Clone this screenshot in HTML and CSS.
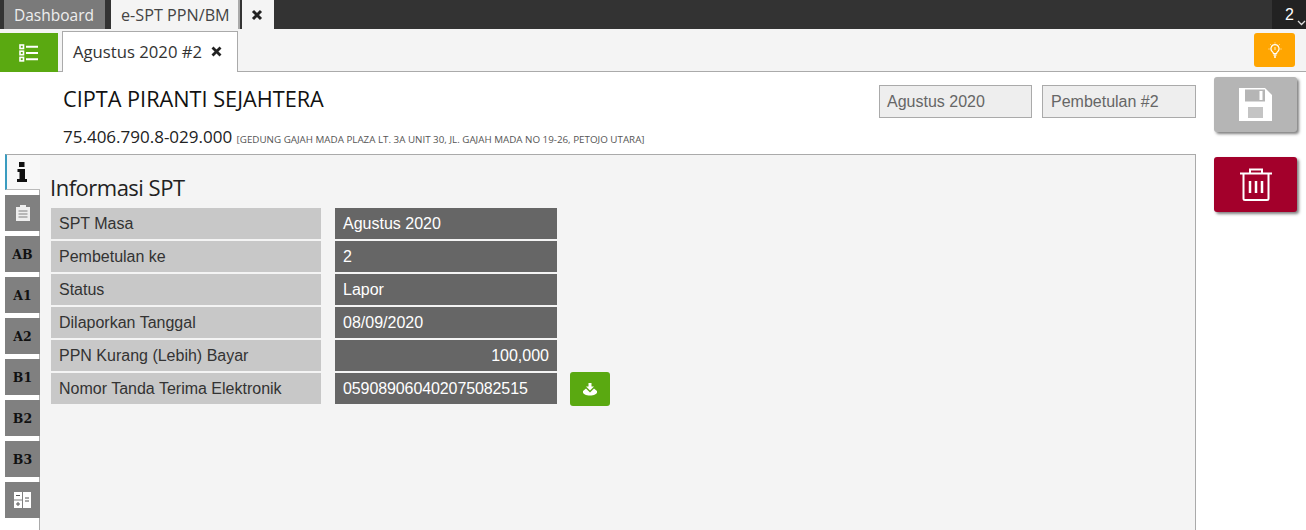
FILE: index.html
```html
<!DOCTYPE html>
<html lang="id">
<head>
<meta charset="utf-8">
<title>e-SPT PPN/BM</title>
<link rel="stylesheet" href="styles.css">
</head>
<body>
<div class="topbar">
  <div class="top-tab top-tab-dark">Dashboard</div>
  <div class="top-tab top-tab-light">e-SPT PPN/BM</div>
  <div class="top-close"><svg width="12" height="12" viewBox="0 0 12 12"><path d="M2 2l8 8M10 2l-8 8" stroke="#222" stroke-width="3" fill="none"/></svg></div>
  <div class="top-count"><span>2</span><svg class="chev" width="9" height="6" viewBox="0 0 9 6"><path d="M1 1l3.500 3.500L8 1" stroke="#ddd" stroke-width="1.300" fill="none"/></svg></div>
</div>
<div class="subbar">
  <div class="menu-btn">
    <svg width="20" height="18" viewBox="0 0 20 18" fill="none" stroke="#fff"><rect x="1" y="1" width="3.500" height="3.500" stroke-width="1.600"/><rect x="1" y="7.200" width="3.500" height="3.500" stroke-width="1.600"/><rect x="1" y="13.400" width="3.500" height="3.500" stroke-width="1.600"/><path d="M7 2.800h12M7 9h12M7 15.200h12" stroke-width="2"/></svg>
  </div>
  <div class="doc-tab"><span>Agustus 2020 #2</span><svg width="11" height="11" viewBox="0 0 11 11"><path d="M1.500 1.500l8 8M9.500 1.500l-8 8" stroke="#222" stroke-width="2.800" fill="none"/></svg></div>
  <div class="hint-btn">
    <svg width="16" height="17" viewBox="0 0 16 17" fill="none" stroke="#fff" stroke-width="1.200"><path d="M8 2.700a4 4 0 0 0-2.400 7.200c.5.400.8 1 .8 1.600h3.200c0-.6.300-1.200.8-1.600A4 4 0 0 0 8 2.700z"/><path d="M8 5v3" stroke="#ffe6b0"/><path d="M6.500 13h3M7 15h2" stroke-width="1.500"/><path d="M8 .5v1M1.500 7h1M13.500 7h1M3.400 2.400l.7.700M12.600 2.400l-.7.700" stroke-width=".8"/></svg>
  </div>
</div>
<div class="workspace">
  <div class="main">
    <header class="head">
      <div class="head-text">
        <h1 class="company">CIPTA PIRANTI SEJAHTERA</h1>
        <p class="npwp">75.406.790.8-029.000 <small class="addr">[GEDUNG GAJAH MADA PLAZA LT. 3A UNIT 30, JL. GAJAH MADA NO 19-26, PETOJO UTARA]</small></p>
      </div>
      <div class="field field-a">Agustus 2020</div>
      <div class="field field-b">Pembetulan #2</div>
    </header>
    <div class="body">
      <nav class="side">
        <div class="side-tab side-active"><svg width="10" height="20" viewBox="0 0 10 20" fill="#111"><rect x="2" y="0" width="5.500" height="5"/><path d="M0.500 7h7.500v10H10v3H0v-3h2.500v-7h-2z"/></svg></div>
        <div class="side-tab"><svg width="14" height="16" viewBox="0 0 14 16"><path d="M0 2h4V0h6v2h4v14H0z" fill="#eee"/><path d="M2.500 6h9M2.500 9h9M2.500 12h9" stroke="#808080" stroke-width="1"/></svg></div>
        <div class="side-tab">AB</div>
        <div class="side-tab">A1</div>
        <div class="side-tab">A2</div>
        <div class="side-tab">B1</div>
        <div class="side-tab">B2</div>
        <div class="side-tab">B3</div>
        <div class="side-tab"><svg width="18" height="16" viewBox="0 0 18 16"><rect width="8" height="16" fill="#fff"/><rect x="9" width="8" height="16" fill="#fff"/><rect y="7.500" width="8" height="1" fill="#808080"/><path d="M2 3.500h4M2 12h4M4 10v4M11 6h4M11 9h4" stroke="#555" stroke-width="1"/></svg></div>
      </nav>
      <section class="panel">
        <h2 class="panel-title">Informasi SPT</h2>
        <div class="info">
          <div class="cell-label">SPT Masa</div><div class="cell-value">Agustus 2020</div><div></div>
          <div class="cell-label">Pembetulan ke</div><div class="cell-value">2</div><div></div>
          <div class="cell-label">Status</div><div class="cell-value">Lapor</div><div></div>
          <div class="cell-label">Dilaporkan Tanggal</div><div class="cell-value">08/09/2020</div><div></div>
          <div class="cell-label">PPN Kurang (Lebih) Bayar</div><div class="cell-value cell-num">100,000</div><div></div>
          <div class="cell-label">Nomor Tanda Terima Elektronik</div><div class="cell-value cell-code">059089060402075082515</div>
          <div class="dl-btn"><svg width="16" height="13" viewBox="0 0 16 13" fill="#fff"><path d="M6.500 0h3v3.500H12L8 7.500 4 3.500h2.500z"/><path d="M4 5.500L1 8v1.500C1 11 4 12.500 8 12.500s7-1.500 7-3V8L12 5.500 8 9.500z"/></svg></div>
        </div>
      </section>
    </div>
  </div>
  <aside class="actions">
    <div class="action action-save"><svg width="33" height="33" viewBox="0 0 33 33"><path fill="#fff" d="M0 0h26l7 7v26H0z"/><path fill="#b5b5b5" d="M6 1.500h20v12H6z"/><rect x="20.500" y="3" width="3" height="9" fill="#fff"/><rect x="9" y="19" width="15" height="11" fill="#c4c4c4"/></svg></div>
    <div class="action action-del"><svg width="32" height="33" viewBox="0 0 32 33" fill="none" stroke="#fff" stroke-width="2"><path d="M0 5.500h32M10 5V1.500h12V5M3.500 6v24.500a1.500 1.500 0 0 0 1.500 1.500h22a1.500 1.500 0 0 0 1.500-1.500V6"/><path d="M10 13v12M16 13v12M22 13v12" stroke-width="2.500"/></svg></div>
  </aside>
</div>
</body>
</html>
```
FILE: styles.css
```css
* { box-sizing: border-box; }
html, body { margin: 0; height: 530px; overflow: hidden; background: #fff; }
body { font-family: "Open Sans", sans-serif; color: #222; }

.topbar { display: flex; height: 29px; background: #333; padding-left: 4px; }
.top-tab { height: 29px; display: flex; align-items: center; font-size: 15.5px; }
.top-tab-dark { width: 101px; padding-left: 10px; background: #7a7a7a; color: #eee; }
.top-tab-light { width: 129px; margin-left: 6px; padding-left: 10px; background: #f4f4f4; color: #444; border-right: 2px solid #aaa; font-size: 16.2px; }
.top-close { width: 32px; margin-left: 2px; background: #f4f4f4; display: flex; align-items: center; justify-content: center; padding-right: 2px; }
.top-count { margin-left: auto; width: 34px; background: #222; color: #fff; font-size: 16px; padding: 6px 0 0 13px; position: relative; font-family: "Liberation Sans", sans-serif; }
.chev { position: absolute; right: 0; bottom: 3px; }

.subbar { display: flex; height: 43px; background: #f4f4f4; border-bottom: 1px solid #aaa; align-items: flex-end; }
.menu-btn { width: 58px; height: 39px; margin-bottom: -1px; background: #5aa911; display: flex; align-items: center; justify-content: center; }
.doc-tab { width: 176px; height: 41px; margin-left: 4px; margin-bottom: -1px; background: #fff; border: 1px solid #aaa; border-bottom: 0; display: flex; align-items: center; padding: 0 0 2px 10px; gap: 9px; font-size: 16.7px; color: #333; }
.hint-btn { align-self: flex-start; margin: 4px 11px 0 auto; width: 41px; height: 34px; background: #ffa500; border-radius: 3px; display: flex; align-items: center; justify-content: center; }

.workspace { display: flex; height: 458px; }
.main { width: 1196px; display: flex; flex-direction: column; }
.head { height: 82px; display: flex; align-items: flex-start; padding: 13px 0 0 63px; }
.head-text { flex: 1; }
.company { margin: 0; font-size: 21.7px; font-weight: 400; line-height: 28px; color: #111; }
.npwp { margin: 13px 0 0; font-size: 17px; line-height: 22px; color: #222; }
.addr { font-size: 9.8px; color: #555; }
.field { height: 33px; background: #eee; border: 1px solid #aaa; color: #666; font-family: "Liberation Sans", sans-serif; font-size: 16px; line-height: 31px; padding-left: 7px; }
.field-a { width: 153px; margin-right: 10px; }
.field-b { width: 154px; padding-left: 8px; }

.body { flex: 1; display: flex; min-height: 0; }
.side { width: 35px; margin-left: 5px; flex: none; position: relative; z-index: 1; display: flex; flex-direction: column; gap: 5px; }
.side-tab { width: 35px; height: 36px; background: #808080; display: flex; align-items: center; justify-content: center; font-family: "DejaVu Serif", serif; font-weight: 700; font-size: 12.500px; color: #111; }
.side-active { background: #f8f8f8; border-left: 2px solid #3a9cc0; border-top: 1px solid #aaa; border-bottom: 1px solid #bbb; padding-right: 3px; }
.panel { flex: 1; margin-left: -1px; background: #f4f4f4; border: 1px solid #aaa; border-bottom: 0; padding: 18px 0 0 10px; }
.panel-title { margin: 0 0 7px; font-size: 22px; letter-spacing: -0.5px; line-height: 28px; font-weight: 400; color: #222; }
.info { display: grid; grid-template-columns: 270px 222px 40px; grid-auto-rows: 31px; row-gap: 2px; column-gap: 14px; margin-left: 1px; font-family: "Liberation Sans", sans-serif; font-size: 16px; }
.cell-label { background: #c8c8c8; color: #333; padding-left: 8px; line-height: 31px; }
.cell-value { background: #666; color: #fff; padding: 0 8px; line-height: 31px; }
.cell-num { text-align: right; }
.cell-code { letter-spacing: -0.1px; }
.dl-btn { width: 40px; height: 34px; margin: -1px 0 0 -1px; background: #5aa911; border-radius: 3px; display: flex; align-items: center; justify-content: center; }

.actions { flex: none; width: 110px; padding: 5px 0 0 18px; display: flex; flex-direction: column; gap: 25px; }
.action { width: 83px; height: 55px; border-radius: 3px; display: flex; align-items: center; justify-content: center; box-shadow: 2px 2px 3px rgba(0,0,0,.5); }
.action-save { background: #b5b5b5; }
.action-del { background: #a3002b; }
```
